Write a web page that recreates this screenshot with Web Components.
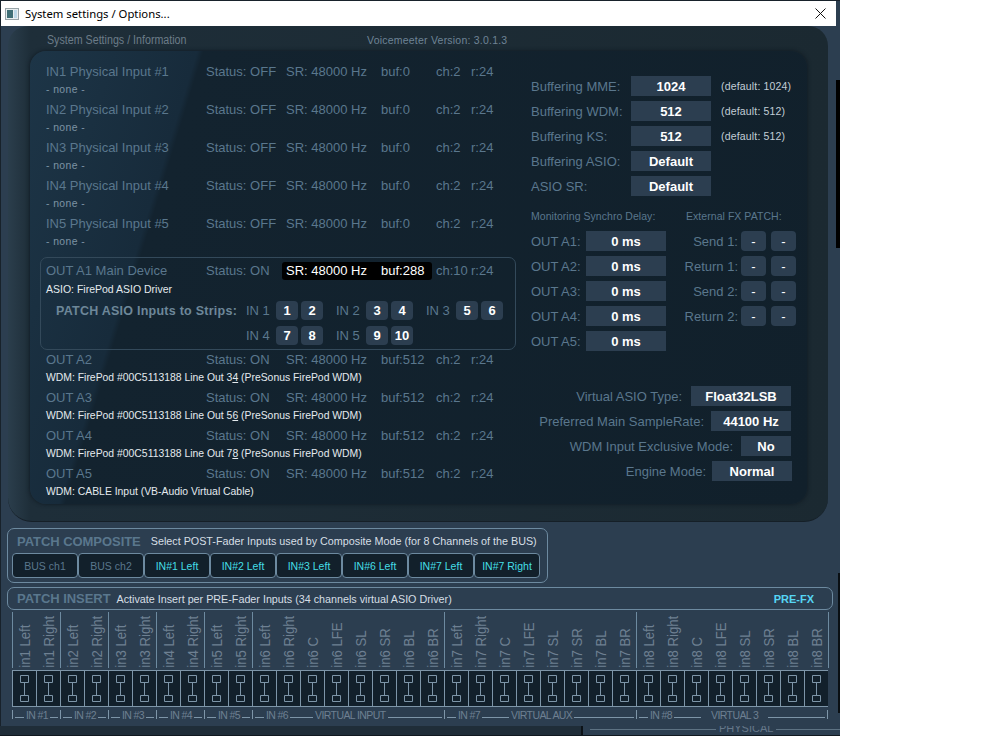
<!DOCTYPE html>
<html>
<head>
<meta charset="utf-8">
<title>System settings / Options...</title>
<style>
  html, body { margin: 0; padding: 0; background: #fff; }
  body { font-family: "Liberation Sans", Arial, sans-serif; }
</style>
</head>
<body>
<vm-desktop>
  <vm-window title="System settings / Options...">
    <vm-info-panel>
      <vm-channel slot="left" name="IN1 Physical Input #1" status="OFF" buf="0" ch="2" device="- none -" dim></vm-channel>
      <vm-channel slot="left" name="IN2 Physical Input #2" status="OFF" buf="0" ch="2" device="- none -" dim></vm-channel>
      <vm-channel slot="left" name="IN3 Physical Input #3" status="OFF" buf="0" ch="2" device="- none -" dim></vm-channel>
      <vm-channel slot="left" name="IN4 Physical Input #4" status="OFF" buf="0" ch="2" device="- none -" dim></vm-channel>
      <vm-channel slot="left" name="IN5 Physical Input #5" status="OFF" buf="0" ch="2" device="- none -" dim></vm-channel>
      <vm-main-device slot="left"></vm-main-device>
      <vm-channel slot="left" name="OUT A2" status="ON" buf="512" ch="2" device="WDM: FirePod #00C5113188 Line Out 3&lt;u&gt;4&lt;/u&gt; (PreSonus FirePod WDM)"></vm-channel>
      <vm-channel slot="left" name="OUT A3" status="ON" buf="512" ch="2" device="WDM: FirePod #00C5113188 Line Out 5&lt;u&gt;6&lt;/u&gt; (PreSonus FirePod WDM)"></vm-channel>
      <vm-channel slot="left" name="OUT A4" status="ON" buf="512" ch="2" device="WDM: FirePod #00C5113188 Line Out 7&lt;u&gt;8&lt;/u&gt; (PreSonus FirePod WDM)"></vm-channel>
      <vm-channel slot="left" name="OUT A5" status="ON" buf="512" ch="2" device="WDM: CABLE Input (VB-Audio Virtual Cable)"></vm-channel>
      <vm-options slot="right"></vm-options>
    </vm-info-panel>
    <vm-patch-composite></vm-patch-composite>
    <vm-patch-insert></vm-patch-insert>
  </vm-window>
</vm-desktop>

<script>
const LABEL = '#5a778d'

class VmDesktop extends HTMLElement {
  constructor() {
    super()
    this.attachShadow({mode: 'open'})
    this.shadowRoot.innerHTML = `
      <style>
        :host { display: block; position: relative; width: 840px; height: 736px; background: #2c3e50; overflow: hidden; }
        #top { position: absolute; left: 0; top: 0; width: 100%; height: 1px; background: #18222b; }
        #edge { position: absolute; left: 0; top: 0; width: 1px; height: 100%; background: #18222b; }
        #base { position: absolute; left: 0; top: 726px; width: 581px; height: 10px; background: #1f2d38; }
        #post { position: absolute; left: 581px; top: 726px; width: 2px; height: 10px; background: #0c1217; }
        #floor { position: absolute; left: 0; top: 735px; width: 100%; height: 1px; background: #10181f; }
        #s1 { position: absolute; left: 836px; top: 80px; width: 4px; height: 168px; background: #000; }
        #s2 { position: absolute; left: 838px; top: 573px; width: 2px; height: 140px; background: #0a0f13; }
        #under { position: absolute; left: 590px; right: 0; top: 729px; display: flex; align-items: center; gap: 3px; color: #66788a; font-size: 11px; height: 1px; }
        #under i { height: 1px; background: #5d7283; }
        #under span { margin-top: -3px; }
        #win { position: absolute; left: 1px; top: 1px; }
      </style>
      <div id="top"></div><div id="edge"></div><div id="base"></div><div id="post"></div><div id="floor"></div>
      <div id="s1"></div><div id="s2"></div>
      <div id="under"><i style="width:126px"></i><span>PHYSICAL</span><i style="flex:1"></i></div>
      <div id="win"><slot></slot></div>
    `
  }
}

class VmWindow extends HTMLElement {
  constructor() {
    super()
    this.attachShadow({mode: 'open'})
    this.shadowRoot.innerHTML = `
      <style>
        :host { display: block; width: 835px; height: 725px; background: #2c3e50; }
        header { height: 25px; background: #fff; display: flex; align-items: center; padding-left: 4px; color: #000; font: 11.3px "Noto Sans", "Liberation Sans", sans-serif; }
        svg { display: block; }
        #t { margin-left: 6px; flex: 1; }
        #x { margin-right: 10px; }
      </style>
      <header>
        <svg width="14" height="12" viewBox="0 0 14 12"><rect x=".5" y=".5" width="13" height="11" fill="#e8eef0" stroke="#98a4a8"/><rect x="2" y="2" width="6" height="8" fill="#3f6f76"/><rect x="9" y="2" width="3" height="8" fill="#bcd8e8"/></svg>
        <span id="t">${this.getAttribute('title')}</span>
        <svg id="x" width="11" height="11" viewBox="0 0 11 11"><path d="M.5.5l10 10M10.5.5l-10 10" stroke="#111" fill="none"/></svg>
      </header>
      <slot></slot>
    `
  }
}

class VmInfoPanel extends HTMLElement {
  constructor() {
    super()
    this.attachShadow({mode: 'open'})
    this.shadowRoot.innerHTML = `
      <style>
        :host { display: block; width: 820px; height: 496px; margin-left: 7px; box-sizing: border-box; border-radius: 20px 20px 24px 24px; border-bottom: 1px solid #151f27;
          background: linear-gradient(90deg, #2b3e4c 0, #1e2e39 22px, #1b2931 100%); }
        #top { height: 25px; box-sizing: border-box; padding: 2px 0 0 39px; display: flex; align-items: center; font-size: 12px; color: #6c7c88; }
        #top span:first-child { display: inline-block; width: 150px; transform: scaleX(.89); transform-origin: left; white-space: nowrap; }
        #ver { margin-left: 170px; font-size: 10.5px; letter-spacing: .22px; color: #6f8496; }
        #inner { margin-left: 22px; width: 777px; height: 453px; border-radius: 16px; display: grid; grid-template-columns: 501px 1fr; box-shadow: 0 0 4px #0e1820;
          background: linear-gradient(107deg, #1d3547 0, #172b3b 160px, #13232f 166px, #11202b 100%); }
        #l { padding: 11px 0 0 16px; }
        #r { padding-top: 25px; }
      </style>
      <div id="top"><span>System Settings / Information</span><span id="ver">Voicemeeter Version: 3.0.1.3</span></div>
      <div id="inner">
        <div id="l"><slot name="left"></slot></div>
        <div id="r"><slot name="right"></slot></div>
      </div>
    `
  }
}

class VmChannel extends HTMLElement {
  constructor() {
    super()
    this.attachShadow({mode: 'open'})
    const dim = this.hasAttribute('dim')
    this.shadowRoot.innerHTML = `
      <style>
        :host { display: block; }
        .row { display: grid; grid-template-columns: 160px 80px 95px 55px 35px auto; height: 19px; align-items: center; font-size: 13px; color: ${LABEL}; white-space: nowrap; }
        .dev { height: 19px; line-height: 17px; font-size: 10.4px; letter-spacing: ${dim ? '.4px' : '0'}; color: ${dim ? '#7d93a4' : '#e4eaee'}; white-space: nowrap; }
      </style>
      <div class="row">
        <span>${this.getAttribute('name')}</span>
        <span>Status: ${this.getAttribute('status')}</span>
        <span>SR: 48000 Hz</span>
        <span>buf:${this.getAttribute('buf')}</span>
        <span>ch:${this.getAttribute('ch')}</span>
        <span>r:24</span>
      </div>
      <div class="dev">${this.getAttribute('device')}</div>
    `
  }
}

class VmMainDevice extends HTMLElement {
  constructor() {
    super()
    this.attachShadow({mode: 'open'})
    const pair = (l, a, b) => `<span class="in">${l}</span><b>${a}</b><b>${b}</b>`
    this.shadowRoot.innerHTML = `
      <style>
        :host { display: block; margin: 5px 0 0 -6px; width: 476px; height: 93px; box-sizing: border-box; border: 1px solid #33495a; border-radius: 7px; padding: 3px 0 0 5px; }
        .row { display: grid; grid-template-columns: 160px 76px 150px 34px auto; height: 19px; align-items: center; font-size: 13px; color: ${LABEL}; white-space: nowrap; }
        .hi { background: #000; color: #fff; border-radius: 3px; height: 18px; width: 150px; box-sizing: border-box; padding: 0 4px; display: flex; align-items: center; }
        .hi span:first-child { width: 95px; }
        .dev { height: 19px; line-height: 19px; font-size: 10.5px; color: #e4eaee; }
        .patch { display: grid; grid-template-columns: 200px repeat(3, 90px); grid-auto-rows: 25px; align-items: center; margin-top: -1px; color: ${LABEL}; font-size: 13px; }
        .title { font-weight: bold; font-size: 12.5px; padding-left: 10px; letter-spacing: .25px; color: #6d8799; white-space: nowrap; }
        .cell { display: flex; align-items: center; }
        .in { width: 30px; white-space: nowrap; }
        b { width: 22px; height: 19px; margin-right: 3px; background: #2c3e50; color: #fff; border-radius: 4px; display: flex; align-items: center; justify-content: center; font-size: 13px; }
      </style>
      <div class="row">
        <span>OUT A1 Main Device</span><span>Status: ON</span>
        <span class="hi"><span>SR: 48000 Hz</span><span>buf:288</span></span>
        <span style="padding-left:4px">ch:10</span><span style="padding-left:5px">r:24</span>
      </div>
      <div class="dev">ASIO: FirePod ASIO Driver</div>
      <div class="patch">
        <span class="title">PATCH ASIO Inputs to Strips:</span>
        <span class="cell">${pair('IN 1', 1, 2)}</span>
        <span class="cell">${pair('IN 2', 3, 4)}</span>
        <span class="cell">${pair('IN 3', 5, 6)}</span>
        <span></span>
        <span class="cell">${pair('IN 4', 7, 8)}</span>
        <span class="cell">${pair('IN 5', 9, 10)}</span>
      </div>
    `
  }
}

class VmOptions extends HTMLElement {
  constructor() {
    super()
    this.attachShadow({mode: 'open'})
    const buf = (l, v, d) => `<div class="row"><span style="width:100px">${l}</span><b style="width:80px">${v}</b>${d ? `<small>(default: ${d})</small>` : ''}</div>`
    const delay = n => `<div class="row"><span style="width:55px">OUT A${n}:</span><b style="width:80px">0 ms</b></div>`
    const fx = l => `<div class="row fx"><span>${l}:</span><b class="m">-</b><b class="m">-</b></div>`
    const pref = (l, v, w, mr, gap = 8) => `<div class="row end" style="margin-right:${mr}px"><span>${l}:</span><b style="width:${w}px;margin-left:${gap}px">${v}</b></div>`
    this.shadowRoot.innerHTML = `
      <style>
        :host { display: block; font-size: 13px; color: ${LABEL}; white-space: nowrap; }
        .row { display: flex; height: 25px; align-items: flex-start; line-height: 21px; }
        b { height: 20px; background: #2c3e50; color: #fff; font-size: 13px; text-align: center; display: block; flex: none; }
        small { font-size: 10.5px; color: #c2ced7; margin-left: 10px; letter-spacing: .17px; }
        .two { display: grid; grid-template-columns: 155px 1fr; }
        h4 { margin: 0; padding-top: 5px; font: normal 10.5px/20px "Liberation Sans", Arial, sans-serif; height: 25px; letter-spacing: .05px; }
        .fx { width: 110px; justify-content: flex-end; }
        .fx .m { width: 25px; margin-left: 5px; border-radius: 4px; font-weight: normal; }
        .fx .m:first-of-type { margin-left: 3px; }
        .end { justify-content: flex-end; }
        #pref { margin-top: 30px; width: 261px; }
      </style>
      ${buf('Buffering MME:', 1024, 1024)}
      ${buf('Buffering WDM:', 512, 512)}
      ${buf('Buffering KS:', 512, 512)}
      ${buf('Buffering ASIO:', 'Default')}
      ${buf('ASIO SR:', 'Default')}
      <div class="two">
        <div><h4>Monitoring Synchro Delay:</h4>${[1,2,3,4,5].map(delay).join('')}</div>
        <div><h4>External FX PATCH:</h4>${['Send 1','Return 1','Send 2','Return 2'].map(fx).join('')}</div>
      </div>
      <div id="pref">
        ${pref('Virtual ASIO Type', 'Float32LSB', 100, 1, 9)}
        ${pref('Preferred Main SampleRate', '44100 Hz', 80, 1, 7)}
        ${pref('WDM Input Exclusive Mode', 'No', 50, 1)}
        ${pref('Engine Mode', 'Normal', 80, 0, 6)}
      </div>
    `
  }
}

class VmPatchComposite extends HTMLElement {
  constructor() {
    super()
    this.attachShadow({mode: 'open'})
    const names = ['BUS ch1', 'BUS ch2', 'IN#1 Left', 'IN#2 Left', 'IN#3 Left', 'IN#6 Left', 'IN#7 Left', 'IN#7 Right']
    this.shadowRoot.innerHTML = `
      <style>
        :host { display: block; margin: 6px 0 0 6px; width: 541px; height: 55px; box-sizing: border-box; border: 1px solid #6d8aa0; border-radius: 7px; padding: 0 0 0 4px; }
        #head { height: 24px; display: flex; align-items: center; padding-left: 5px; white-space: nowrap; }
        h3 { margin: 0; font-size: 13px; color: #5a778d; letter-spacing: -.05px; }
        p { margin: 0 0 0 10px; font-size: 10.78px; color: #d6dfe5; white-space: nowrap; }
        #btns { display: flex; }
        span { width: 66px; height: 25px; box-sizing: border-box; border: 1px solid #6d8aa0; border-radius: 4px; background: #12202b; color: #5a778d; font-size: 10.5px; display: flex; align-items: center; justify-content: center; white-space: nowrap; }
        span.on { color: #45dfe6; }
      </style>
      <div id="head"><h3>PATCH COMPOSITE</h3><p>Select POST-Fader Inputs used by Composite Mode (for 8 Channels of the BUS)</p></div>
      <div id="btns">${names.map((n, i) => `<span class="${i > 1 ? 'on' : ''}">${n}</span>`).join('')}</div>
    `
  }
}

class VmPatchInsert extends HTMLElement {
  constructor() {
    super()
    this.attachShadow({mode: 'open'})
    const ins = []
    for (let i = 1; i <= 5; i++) ins.push([`in${i} Left`, `in${i} Right`])
    const sfx = ['Left', 'Right', 'C', 'LFE', 'SL', 'SR', 'BL', 'BR']
    for (const i of [6, 7, 8]) ins.push(sfx.map(s => `in${i} ${s}`))
    const labels = ins.map(g => `<div class="grp">${g.map(t => `<span>${t}</span>`).join('')}</div>`).join('')
    const cell = `<svg width="24" height="35" viewBox="0 0 24 35"><path d="M.5 0v35" stroke="#7d95a8"/><path d="M8.5 4.5h8v7h-8zM8.5 24.5h8v6h-8zM12.5 11.5v13" fill="none" stroke="#7d95a8"/></svg>`
    const line = w => `<i style="flex:${w ? `0 0 ${w}px` : '1'}"></i>`
    const em = (t, m = 0) => `<em style="margin:0 ${m}px">${t}</em>`
    const group = (w, ...parts) => `<div class="g" style="width:${w}px">${parts.join('')}</div>`
    const small = n => group(48, line(9), em(`IN #${n}`), line())
    this.shadowRoot.innerHTML = `
      <style>
        :host { display: block; }
        #bar { margin: 4px 0 0 6px; width: 826px; height: 23px; box-sizing: border-box; border: 1px solid #6d8aa0; border-radius: 7px; display: flex; align-items: center; padding: 0 18px 0 9px; white-space: nowrap; }
        h3 { margin: 0; font-size: 13px; color: #5a778d; letter-spacing: -.05px; }
        p { margin: 0 0 0 6px; flex: 1; font-size: 10.75px; color: #d6dfe5; }
        b { font-size: 11px; color: #56d6f5; }
        #labels { display: flex; margin: 2px 0 0 11px; height: 56px; border-right: 1px solid #6d8aa0; width: 816px; }
        .grp { display: flex; border-left: 1px solid #6d8aa0; height: 56px; box-sizing: border-box; }
        .grp span { width: 24px; writing-mode: vertical-rl; transform: translate(1px, 4px) scaleY(.85) rotate(180deg); font-size: 15.5px; line-height: 24px; color: #6e8092; white-space: nowrap; box-sizing: border-box; padding-left: 2px; }
        .grp span:first-child { margin-left: -1px; }
        #cells { margin: 2px 0 0 11px; width: 816px; height: 37px; box-sizing: border-box; display: flex; background: #12202b; border-top: 1px solid #7d95a8; border-bottom: 1px solid #7d95a8; }
        svg { display: block; flex: none; }
        #groups { margin: 3px 0 0 11px; display: flex; width: 817px; height: 9px; }
        .g { display: flex; box-sizing: border-box; border-left: 1px solid #7d95a8; height: 9px; padding: 0 2px; align-items: flex-end; gap: 2px; flex: none; }
        .g:last-child { border-right: 1px solid #7d95a8; }
        .g i { display: block; height: 1px; background: #7d95a8; margin-bottom: 1px; }
        .g em { font-style: normal; font-size: 10.5px; line-height: 10px; letter-spacing: -.6px; color: #6e8092; height: 9px; white-space: nowrap; }
      </style>
      <div id="bar"><h3>PATCH INSERT</h3><p>Activate Insert per PRE-Fader Inputs (34 channels virtual ASIO Driver)</p><b>PRE-FX</b></div>
      <div id="labels">${labels}</div>
      <div id="cells">${cell.repeat(34)}</div>
      <div id="groups">
        ${[1, 2, 3, 4, 5].map(small).join('')}
        ${group(192, line(9), em('IN #6'), line(23), em('VIRTUAL INPUT'), line())}
        ${group(192, line(9), em('IN #7'), line(27), em('VIRTUAL AUX'), line())}
        ${group(192, line(9), em('IN #8'), line(27), em('VIRTUAL 3', 8), line())}
      </div>
    `
  }
}

customElements.define('vm-desktop', VmDesktop)
customElements.define('vm-window', VmWindow)
customElements.define('vm-info-panel', VmInfoPanel)
customElements.define('vm-channel', VmChannel)
customElements.define('vm-main-device', VmMainDevice)
customElements.define('vm-options', VmOptions)
customElements.define('vm-patch-composite', VmPatchComposite)
customElements.define('vm-patch-insert', VmPatchInsert)
</script>
</body>
</html>
